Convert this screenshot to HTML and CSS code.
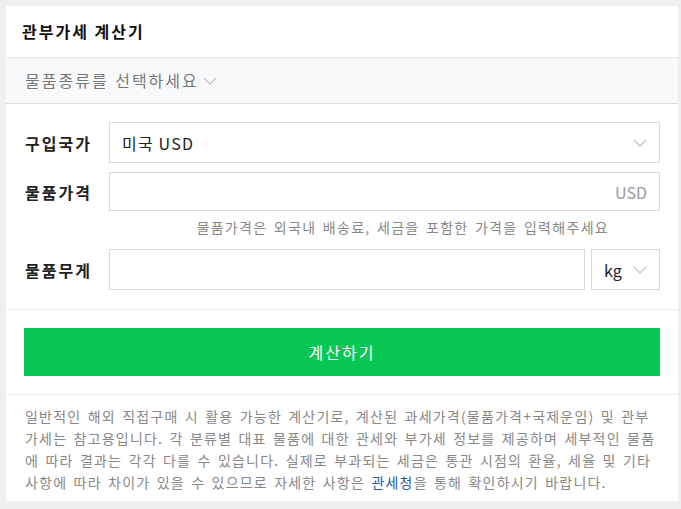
FILE: index.html
```
<!DOCTYPE html>
<html>
  <head>
    <title>관부가세 계산기</title>
    <link rel="stylesheet" href="styles.css">
  </head>
  <body>
    <div class="card">
      <h2 class="card-title">관부가세 계산기</h2>
      <div class="category">
        <span>물품종류를 선택하세요</span>
        <svg class="chev" width="14" height="8" viewBox="0 0 14 8"><path d="M1 1l6 6 6-6" fill="none" stroke="#c4c4c4" stroke-width="1.3"/></svg>
      </div>
      <form class="calc-form">
        <div class="row">
          <label>구입국가</label>
          <div class="box select">
            <span>미국 USD</span>
            <svg class="chev" width="14" height="8" viewBox="0 0 14 8"><path d="M1 1l6 6 6-6" fill="none" stroke="#c4c4c4" stroke-width="1.3"/></svg>
          </div>
        </div>
        <div class="row row-price">
          <label>물품가격</label>
          <div class="box price"><span class="unit">USD</span></div>
        </div>
        <p class="hint">물품가격은 외국내 배송료, 세금을 포함한 가격을 입력해주세요</p>
        <div class="row">
          <label>물품무게</label>
          <div class="box weight"></div>
          <div class="box select kg">
            <span>kg</span>
            <svg class="chev" width="14" height="8" viewBox="0 0 14 8"><path d="M1 1l6 6 6-6" fill="none" stroke="#c4c4c4" stroke-width="1.3"/></svg>
          </div>
        </div>
      </form>
      <div class="actions">
        <button type="button">계산하기</button>
      </div>
      <p class="notice">일반적인 해외 직접구매 시 활용 가능한 계산기로, 계산된 과세가격(물품가격+국제운임) 및 관부가세는 참고용입니다. 각 분류별 대표 물품에 대한 관세와 부가세 정보를 제공하며 세부적인 물품에 따라 결과는 각각 다를 수 있습니다. 실제로 부과되는 세금은 통관 시점의 환율, 세율 및 기타 사항에 따라 차이가 있을 수 있으므로 자세한 사항은 <a href="#">관세청</a>을 통해 확인하시기 바랍니다.</p>
    </div>
    <div class="card next"></div>
  </body>
</html>
```

FILE: styles.css
```
/* Basic styling */
body { margin: 0; padding: 6px 3px 0 6px; background: #eeeff1; font-family: "Noto Sans CJK KR", "Noto Sans", sans-serif; color: #222; overflow: hidden; }
.card { width: 672px; background: #fff; }
.card.next { margin-top: 8px; height: 20px; }
.card-title { margin: 0; height: 51px; line-height: 51px; padding: 0 16px; font-size: 16px; font-weight: bold; letter-spacing: 2px; color: #111; border-bottom: 1px solid #e8e8e8; }

.category { height: 45px; line-height: 45px; padding: 0 19px; background: #f8f9fa; color: #777; font-size: 16px; letter-spacing: 2px; word-spacing: 1px; border-bottom: 1px solid #dcdcdc; display: flex; align-items: center; gap: 4px; }

.calc-form { padding: 18px 18px 19px 19px; border-bottom: 1px solid #ececec; }
.row { display: flex; align-items: center; }
.row-price { margin-top: 9px; }
.row label { width: 84px; flex: none; font-size: 16px; font-weight: bold; letter-spacing: 2px; color: #222; }
.box { flex: 1; height: 39px; border: 1px solid #dadada; display: flex; align-items: center; font-size: 16px; padding: 0 12px; }
.select { justify-content: space-between; letter-spacing: 1.2px; }
.price { height: 37px; justify-content: flex-end; }
.unit { color: #999; }
.weight { margin-right: 6px; }
.kg { flex: none; width: 43px; letter-spacing: 0; }
.hint { margin: 0; padding: 6px 51px 0 0; height: 32px; text-align: right; font-size: 14px; line-height: 20px; letter-spacing: 1.3px; word-spacing: 2px; color: #888; }

.actions { padding: 18px; border-bottom: 1px solid #ececec; }
.actions button { display: block; width: 100%; height: 48px; border: none; background: #08c755; color: #fff; font-family: inherit; font-size: 16px; letter-spacing: 2px; }

.notice { margin: 0; padding: 10px 19px 8px 19px; font-size: 14px; line-height: 22px; letter-spacing: 1.2px; word-spacing: 2px; color: #888; }
.notice a { color: #1f5a9e; text-decoration: none; }
```
